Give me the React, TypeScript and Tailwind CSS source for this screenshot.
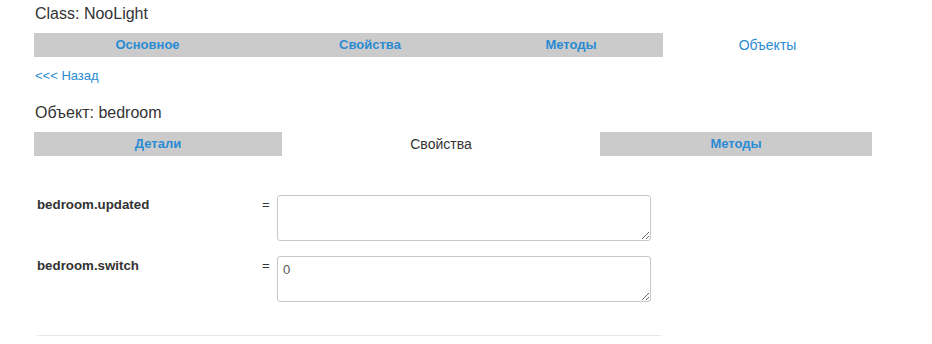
import React from "react";

const blue = "text-[#2a8bd3]";

export default function App() {
  return (
    <div className="w-[932px] h-[344px] bg-white overflow-hidden text-[#333] font-['Liberation_Sans',Arial,sans-serif]">
      <div className="pl-[34px] pt-[4px]">
        <div className="text-[16px] leading-[20px] pl-[1px]">Class: NooLight</div>
        <div className="mt-[9px] flex h-[24px] w-[838px] text-[13px] font-bold">
          <div className={`w-[227px] bg-[#cbcbcb] flex items-center justify-center ${blue}`}>Основное</div>
          <div className={`w-[218px] bg-[#cbcbcb] flex items-center justify-center ${blue}`}>Свойства</div>
          <div className={`w-[184px] bg-[#cbcbcb] flex items-center justify-center ${blue}`}>Методы</div>
          <div className={`w-[209px] bg-white flex items-center justify-center font-normal text-[14px] ${blue}`}>Объекты</div>
        </div>
        <div className={`mt-[10px] text-[13px] leading-[18px] pl-[1px] ${blue}`}>&lt;&lt;&lt; Назад</div>
        <div className="mt-[18px] text-[16px] leading-[20px] pl-[1px]">Объект: bedroom</div>
        <div className="mt-[9px] flex h-[24px] w-[838px] text-[13px] font-bold">
          <div className={`w-[248px] bg-[#cbcbcb] flex items-center justify-center ${blue}`}>Детали</div>
          <div className="w-[318px] bg-white flex items-center justify-center font-normal text-[14px] text-[#333]">Свойства</div>
          <div className={`w-[272px] bg-[#cbcbcb] flex items-center justify-center ${blue}`}>Методы</div>
        </div>
        <div className="mt-[39px] flex flex-col gap-[15px]">
          <div className="flex items-start">
            <div className="w-[228px] pl-[3px] pt-[2px] text-[13.3px] font-bold leading-[16px]">bedroom.updated</div>
            <div className="w-[15px] text-[13px] pt-[2px] leading-[16px]">=</div>
            <textarea className="w-[374px] h-[46px] border border-[#c8c8c8] rounded-[3px] px-[5px] py-[4px] text-[13px] text-[#555] leading-[18px] outline-none" defaultValue="" />
          </div>
          <div className="flex items-start">
            <div className="w-[228px] pl-[3px] pt-[2px] text-[13.3px] font-bold leading-[16px]">bedroom.switch</div>
            <div className="w-[15px] text-[13px] pt-[2px] leading-[16px]">=</div>
            <textarea className="w-[374px] h-[46px] border border-[#c8c8c8] rounded-[3px] px-[5px] py-[4px] text-[13px] text-[#555] leading-[18px] outline-none" defaultValue="0" />
          </div>
        </div>
        <div className="mt-[33px] ml-[3px] w-[624px] border-t border-[#e8e8e8]" />
      </div>
    </div>
  );
}
